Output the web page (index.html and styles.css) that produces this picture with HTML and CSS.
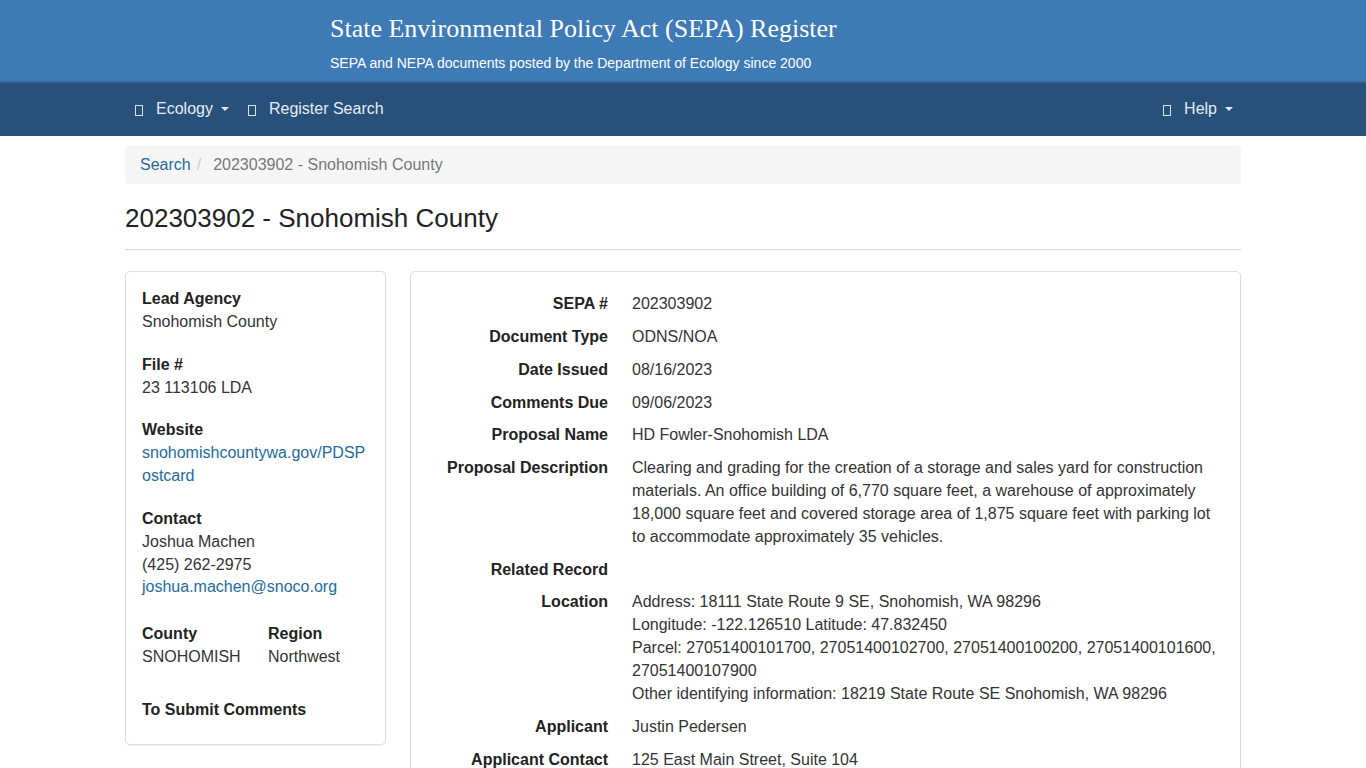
FILE: index.html
```html
<!DOCTYPE html>
<html lang="en">
<head>
<meta charset="utf-8">
<title>SEPA Register - 202303902</title>
<link rel="stylesheet" href="styles.css">
</head>
<body>
<header class="banner">
  <div class="banner-inner">
    <div class="site-title">State Environmental Policy Act (SEPA) Register</div>
    <div class="site-sub">SEPA and NEPA documents posted by the Department of Ecology since 2000</div>
  </div>
</header>
<nav class="navbar">
  <div class="container nav-inner">
    <ul class="nav">
      <li><a href="#"><span class="ico"></span>Ecology<span class="caret"></span></a></li>
      <li><a href="#"><span class="ico"></span>Register Search</a></li>
    </ul>
    <ul class="nav">
      <li><a href="#"><span class="ico"></span>Help<span class="caret"></span></a></li>
    </ul>
  </div>
</nav>
<main class="container">
  <ol class="breadcrumb">
    <li><a href="#">Search</a></li>
    <li class="sep">/</li>
    <li class="active">202303902 - Snohomish County</li>
  </ol>
  <h1 class="page-title">202303902 - Snohomish County</h1>
  <div class="cols">
    <aside class="panel side">
      <div class="group">
        <div class="lbl">Lead Agency</div>
        <div>Snohomish County</div>
      </div>
      <div class="group">
        <div class="lbl">File #</div>
        <div>23 113106 LDA</div>
      </div>
      <div class="group">
        <div class="lbl">Website</div>
        <div class="wrap"><a href="#">snohomishcountywa.gov/PDSPostcard</a></div>
      </div>
      <div class="group">
        <div class="lbl">Contact</div>
        <div>Joshua Machen</div>
        <div>(425) 262-2975</div>
        <div><a href="#">joshua.machen@snoco.org</a></div>
      </div>
      <div class="group pair">
        <div>
          <div class="lbl">County</div>
          <div>SNOHOMISH</div>
        </div>
        <div>
          <div class="lbl">Region</div>
          <div>Northwest</div>
        </div>
      </div>
      <div class="group last">
        <div class="lbl">To Submit Comments</div>
      </div>
    </aside>
    <section class="panel detail">
      <dl class="dl">
        <dt>SEPA #</dt><dd>202303902</dd>
        <dt>Document Type</dt><dd>ODNS/NOA</dd>
        <dt>Date Issued</dt><dd>08/16/2023</dd>
        <dt>Comments Due</dt><dd>09/06/2023</dd>
        <dt>Proposal Name</dt><dd>HD Fowler-Snohomish LDA</dd>
        <dt>Proposal Description</dt><dd>Clearing and grading for the creation of a storage and sales yard for construction materials. An office building of 6,770 square feet, a warehouse of approximately 18,000 square feet and covered storage area of 1,875 square feet with parking lot to accommodate approximately 35 vehicles.</dd>
        <dt>Related Record</dt><dd></dd>
        <dt>Location</dt><dd>Address: 18111 State Route 9 SE, Snohomish, WA 98296<br>Longitude: -122.126510 Latitude: 47.832450<br>Parcel: 27051400101700, 27051400102700, 27051400100200, 27051400101600, 27051400107900<br>Other identifying information: 18219 State Route SE Snohomish, WA 98296</dd>
        <dt>Applicant</dt><dd>Justin Pedersen</dd>
        <dt>Applicant Contact</dt><dd>125 East Main Street, Suite 104</dd>
      </dl>
    </section>
  </div>
</main>
</body>
</html>
```
FILE: styles.css
```css
* { box-sizing: border-box; }
html, body { margin: 0; padding: 0; }
body {
  font-family: "Liberation Sans", Arial, sans-serif;
  font-size: 16px;
  line-height: 1.428571;
  color: #333;
  background: #fff;
}
a { color: #1d6b9d; text-decoration: none; }

.banner {
  background: #3e7ab5;
  height: 83px;
  border-bottom: 2px solid #33679b;
}
.banner-inner { padding: 13px 0 0 330px; }
.site-title {
  font-family: "Liberation Serif", "Times New Roman", serif;
  font-size: 26px;
  line-height: 32px;
  color: #fff;
}
.site-sub {
  margin-top: 10px;
  font-size: 14px;
  line-height: 16px;
  color: #fff;
}

.container { width: 1116px; margin: 0 auto; }

.navbar { background: #27507a; height: 53px; }
.nav-inner { display: flex; justify-content: space-between; align-items: center; height: 53px; }
.nav { list-style: none; margin: 0; padding: 0; display: flex; }
.nav a {
  display: flex;
  align-items: center;
  padding: 0 9px 0 10px;
  color: #e4ecf3;
  font-size: 16px;
  line-height: 51px;
  margin-bottom: 2px;
}
.nav:last-child a { padding-right: 8px; }
.ico {
  display: inline-block;
  width: 8px;
  height: 11px;
  border: 1px solid #d8e2ec;
  margin-right: 13px;
  margin-top: 3px;
}
.caret {
  display: inline-block;
  width: 0; height: 0;
  border-left: 4px solid transparent;
  border-right: 4px solid transparent;
  border-top: 4px solid #e4ecf3;
  margin-left: 8px;
}

.breadcrumb {
  list-style: none;
  display: flex;
  margin: 10px 0 0;
  padding: 8px 15px;
  height: 38px;
  background: #f5f5f5;
  border-radius: 4px;
  line-height: 22px;
}
.breadcrumb .sep { color: #ccc; padding: 0 5px 0 6px; }
.breadcrumb .active { color: #777; padding-left: 7px; }

.page-title {
  font-size: 26px;
  font-weight: normal;
  line-height: 29px;
  margin: 20px 0 0;
  padding-bottom: 16px;
  border-bottom: 1px solid #d6d6d6;
  color: #222;
}

.cols { display: flex; gap: 24px; margin-top: 21px; align-items: flex-start; }
.panel {
  border: 1px solid #ddd;
  border-radius: 5px;
  box-shadow: 0 1px 1px rgba(0,0,0,0.05);
  background: #fff;
}
.side { width: 261px; flex: none; padding: 16px 16px 22px; }
.group { margin-bottom: 20px; }
.group .lbl { font-weight: bold; color: #222; }
.wrap { word-break: break-all; }
.pair { display: flex; margin-top: 24px; margin-bottom: 30px; }
.pair > div:first-child { width: 126px; }
.group.last { margin-bottom: 0; }

.detail { flex: 1; padding: 21px 16px 0 16px; height: 600px; }
.dl { margin: 0; display: grid; grid-template-columns: 181px 1fr; column-gap: 24px; row-gap: 10px; }
.dl dt { font-weight: bold; text-align: right; color: #222; }
.dl dd { margin: 0; min-height: 22.857px; }
```
